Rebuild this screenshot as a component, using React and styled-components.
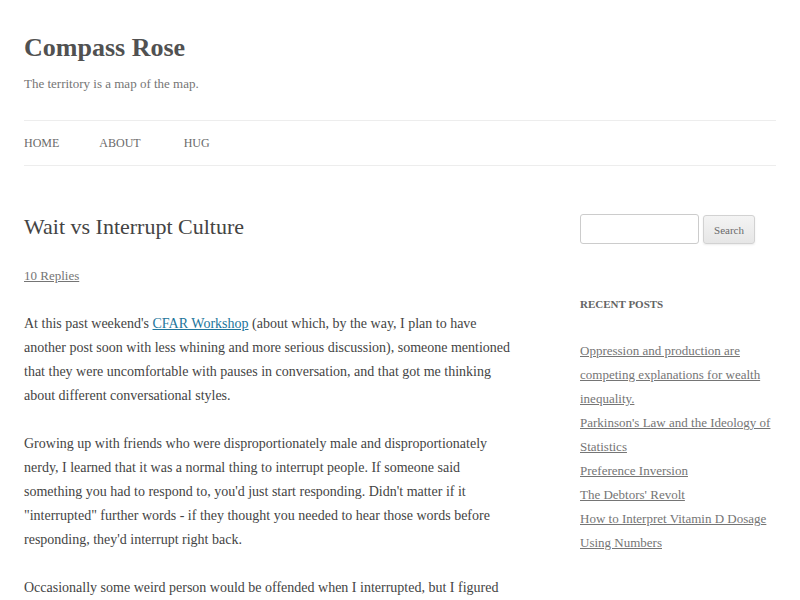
import React from 'react';
import styled, { createGlobalStyle } from 'styled-components';

const GlobalStyle = createGlobalStyle`
  html, body {
    margin: 0;
    padding: 0;
    background: #fff;
  }
  body {
    font-family: "Liberation Serif", "Times New Roman", serif;
    color: #444;
  }
`;

const Page = styled.div`
  padding: 24px 24px 0;
`;

const SiteTitle = styled.h1`
  margin: 0;
  font-size: 26px;
  line-height: 48px;
  font-weight: 700;
  color: #515151;
`;

const Tagline = styled.p`
  margin: 1px 0 0;
  font-size: 13px;
  line-height: 22px;
  color: #757575;
`;

const Nav = styled.nav`
  margin-top: 25px;
  border-top: 1px solid #ededed;
  border-bottom: 1px solid #ededed;
  display: flex;
  height: 44px;
  align-items: center;
`;

const NavLink = styled.a`
  font-size: 12px;
  text-transform: uppercase;
  color: #6a6a6a;
  text-decoration: none;
  margin-right: ${props => props.$gap}px;
`;

const Layout = styled.div`
  display: flex;
  justify-content: space-between;
`;

const Primary = styled.main`
  width: 490px;
  padding-top: 49px;
`;

const EntryTitle = styled.h2`
  margin: 0;
  font-size: 22px;
  line-height: 24px;
  font-weight: 400;
  color: #444;
`;

const Replies = styled.a`
  display: block;
  margin: 25px 0 24px;
  font-size: 13px;
  line-height: 24px;
  color: #757575;
  text-decoration: underline;
`;

const Paragraph = styled.p`
  margin: 0 0 24px;
  font-size: 14px;
  line-height: 24px;
  color: #444;
`;

const InlineLink = styled.a`
  color: #21759b;
  text-decoration: underline;
`;

const Sidebar = styled.aside`
  width: 196px;
  padding-top: 48px;
`;

const SearchForm = styled.form`
  display: flex;
  align-items: flex-start;
  gap: 4px;
`;

const SearchInput = styled.input`
  box-sizing: border-box;
  width: 119px;
  height: 30px;
  border: 1px solid #ccc;
  border-radius: 3px;
  font-family: inherit;
  padding: 6px;
`;

const SearchButton = styled.button`
  box-sizing: border-box;
  margin-top: 1px;
  width: 52px;
  height: 29px;
  font-family: "Liberation Serif", serif;
  font-size: 11px;
  color: #6a6a6a;
  border: 1px solid #d2d2d2;
  border-radius: 3px;
  background: linear-gradient(#f4f4f4, #e6e6e6);
  box-shadow: 0 1px 2px rgba(64, 64, 64, 0.1);
  padding: 0;
`;

const WidgetTitle = styled.h3`
  margin: 48px 0 23px;
  font-size: 11px;
  line-height: 24px;
  font-weight: 700;
  text-transform: uppercase;
  color: #636363;
`;

const PostList = styled.ul`
  list-style: none;
  margin: 0;
  padding: 0;
`;

const PostItem = styled.li`
  font-size: 13px;
  line-height: 24px;

  a {
    color: #757575;
    text-decoration: underline;
  }
`;

const recentPosts = [
  'Oppression and production are competing explanations for wealth inequality.',
  "Parkinson's Law and the Ideology of Statistics",
  'Preference Inversion',
  "The Debtors' Revolt",
  'How to Interpret Vitamin D Dosage Using Numbers',
];

const App = () => (
  <>
    <GlobalStyle />
    <Page>
      <header>
        <SiteTitle>Compass Rose</SiteTitle>
        <Tagline>The territory is a map of the map.</Tagline>
        <Nav>
          <NavLink $gap={40}>Home</NavLink>
          <NavLink $gap={43}>About</NavLink>
          <NavLink $gap={0}>Hug</NavLink>
        </Nav>
      </header>
      <Layout>
        <Primary>
          <EntryTitle>Wait vs Interrupt Culture</EntryTitle>
          <Replies>10 Replies</Replies>
          <Paragraph>
            At this past weekend's <InlineLink>CFAR Workshop</InlineLink> (about which, by the way, I plan to have
            another post soon with less whining and more serious discussion), someone mentioned
            that they were uncomfortable with pauses in conversation, and that got me thinking
            about different conversational styles.
          </Paragraph>
          <Paragraph>
            Growing up with friends who were disproportionately male and disproportionately
            nerdy, I learned that it was a normal thing to interrupt people. If someone said
            something you had to respond to, you'd just start responding. Didn't matter if it
            "interrupted" further words - if they thought you needed to hear those words before
            responding, they'd interrupt right back.
          </Paragraph>
          <Paragraph>
            Occasionally some weird person would be offended when I interrupted, but I figured
            that was their problem.
          </Paragraph>
        </Primary>
        <Sidebar>
          <SearchForm onSubmit={e => e.preventDefault()}>
            <SearchInput type="text" />
            <SearchButton type="submit">Search</SearchButton>
          </SearchForm>
          <WidgetTitle>Recent Posts</WidgetTitle>
          <PostList>
            {recentPosts.map((title, i) => (
              <PostItem key={i}>
                <a>{title}</a>
              </PostItem>
            ))}
          </PostList>
        </Sidebar>
      </Layout>
    </Page>
  </>
);

export default App;
